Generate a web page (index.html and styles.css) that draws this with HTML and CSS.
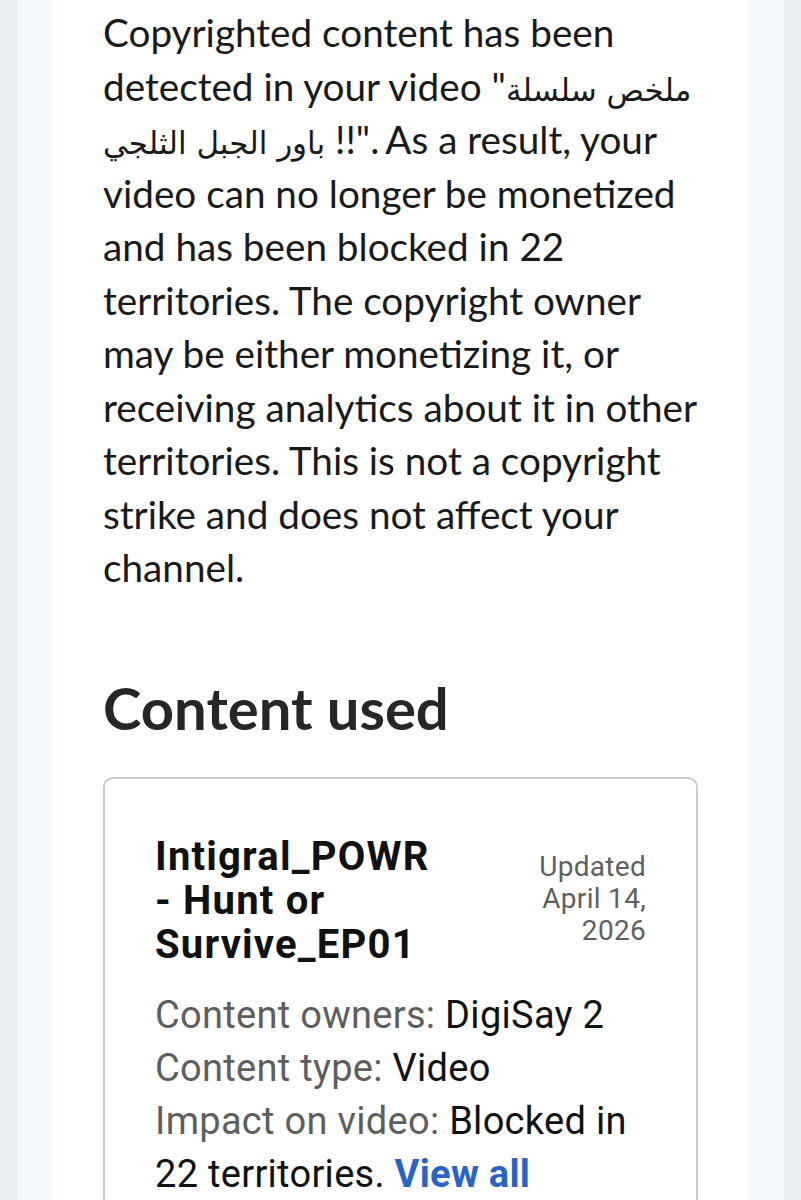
FILE: index.html
```html
<!DOCTYPE html>
<html lang="en">
<head>
<meta charset="utf-8">
<title>Copyright claim</title>
<link rel="stylesheet" href="styles.css">
</head>
<body>
<div class="frame">
  <main class="panel">
    <p class="intro">Copyrighted content has been detected in your video "<span class="ar" lang="ar">ملخص سلسلة باور الجبل الثلجي</span> !!". As a result, your video can no longer be monetized and has been blocked in 22 territories. The copyright owner may be either monetizing it, or receiving analytics about it in other territories. This is not a copyright strike and does not affect your channel.</p>
    <h2 class="section-title">Content used</h2>
    <section class="card">
      <div class="card-head">
        <h3 class="card-title">Intigral_POWR - Hunt or Survive_EP01</h3>
        <div class="updated">Updated April 14, 2026</div>
      </div>
      <div class="details">
        <div class="row"><span class="label">Content owners:</span> DigiSay 2</div>
        <div class="row"><span class="label">Content type:</span> Video</div>
        <div class="row"><span class="label">Impact on video:</span> Blocked in 22 territories. <a class="link" href="#">View all</a></div>
      </div>
    </section>
  </main>
</div>
</body>
</html>
```

FILE: styles.css
```css
html, body {
  margin: 0;
  padding: 0;
}
body {
  background: #e9ecf1;
  padding: 0 17px;
  min-height: 1200px;
  box-sizing: border-box;
}
.frame {
  background: #f4f7fb;
  padding: 0 35px;
  min-height: 1200px;
}
.panel {
  background: #ffffff;
  padding: 6px 51px 40px 51px;
  min-height: 1200px;
  box-sizing: border-box;
}
.intro {
  margin: 0 -2px 0 0;
  font-family: Lato, "Noto Sans", sans-serif;
  font-size: 38.7px;
  line-height: 53.5px;
  color: #1a1a1a;
}
.ar {
  font-family: "DejaVu Sans", sans-serif;
  font-size: 31px;
  line-height: 1;
}
.section-title {
  margin: 81px 0 37px 0;
  font-family: Lato, "Noto Sans", sans-serif;
  font-weight: 700;
  font-size: 58px;
  line-height: 64px;
  color: #262626;
}
.card {
  border: 2px solid #cacaca;
  border-radius: 10px;
  padding: 56px 50px 30px 50px;
  font-family: Roboto, "Noto Sans", sans-serif;
}
.card-head {
  display: flex;
  align-items: flex-start;
}
.card-title {
  flex: 1;
  margin: 0;
  font-size: 40px;
  letter-spacing: 1.2px;
  line-height: 44px;
  font-weight: 700;
  color: #111111;
}
.updated {
  width: 112px;
  margin-left: 85px;
  margin-top: 16px;
  text-align: right;
  font-size: 28px;
  letter-spacing: 0.3px;
  line-height: 32px;
  color: #5f5f5f;
}
.details {
  margin-top: 22px;
  font-size: 38px;
  letter-spacing: 0.3px;
  line-height: 53px;
  color: #111111;
}
.label {
  color: #5e5e5e;
}
.link {
  color: #2a63c6;
  font-weight: 700;
  text-decoration: none;
}
```
